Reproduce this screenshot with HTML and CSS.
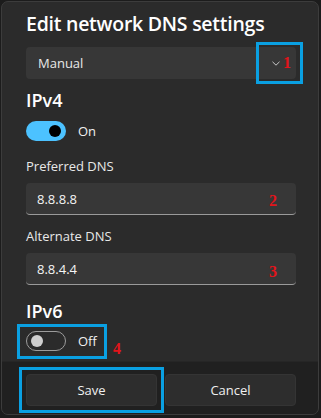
FILE: index.html
```html
<!DOCTYPE html>
<html>
<head>
<meta charset="utf-8">
<link rel="stylesheet" href="styles.css">
</head>
<body>
<div class="dialog">
  <div class="content">
    <h1 class="title">Edit network DNS settings</h1>
    <div class="select">
      <span>Manual</span>
      <svg class="chev" width="8" height="5" viewBox="0 0 8 5"><path d="M0.5 0.8 L4 4.2 L7.5 0.8" fill="none" stroke="#c8c8c8" stroke-width="1"/></svg>
      <span class="mark m1">1</span>
      <span class="hl hl1"></span>
    </div>
    <h2 class="section">IPv4</h2>
    <div class="toggle-row">
      <span class="toggle on"><span class="knob"></span></span>
      <span class="tlabel">On</span>
    </div>
    <div class="label lbl1">Preferred DNS</div>
    <div class="field"><span>8.8.8.8</span><span class="mark m2">2</span></div>
    <div class="label lbl2">Alternate DNS</div>
    <div class="field"><span>8.8.4.4</span><span class="mark m3">3</span></div>
    <h2 class="section s6">IPv6</h2>
    <div class="toggle-row off-row">
      <span class="toggle off"><span class="knob"></span></span>
      <span class="tlabel">Off</span>
      <span class="hl hl4"></span>
      <span class="mark m4">4</span>
    </div>
  </div>
  <div class="footer">
    <button class="btn save">Save<span class="hl hl5"></span></button>
    <button class="btn">Cancel</button>
  </div>
</div>
</body>
</html>
```
FILE: styles.css
```css
html, body {
  margin: 0;
  padding: 0;
  background: #1c1c1c;
}
body {
  width: 321px;
  height: 418px;
  overflow: hidden;
  font-family: "Open Sans", "Noto Sans", sans-serif;
  color: #ffffff;
}
.dialog {
  margin: 1px 0 0 1px;
  width: 316px;
  height: 412px;
  border: 1px solid #3c3c3c;
  border-radius: 7px;
  background: #2b2b2b;
  overflow: hidden;
  display: flex;
  flex-direction: column;
}
.content {
  padding: 0 20px 0 24px;
  flex: 1;
  display: flex;
  flex-direction: column;
}
.title {
  margin: 8px 0 0 0;
  font-size: 19.5px;
  font-weight: 600;
  line-height: 28px;
  letter-spacing: -0.25px;
  height: 29px;
}
.select {
  position: relative;
  margin-top: 8px;
  height: 32px;
  width: 270px;
  box-sizing: border-box;
  background: #373737;
  border-radius: 4px;
  display: flex;
  align-items: center;
  padding-left: 12px;
  font-size: 13px;
  color: #e8e8e8;
}
.chev {
  position: absolute;
  left: 246px;
  top: 14px;
}
.mark {
  position: absolute;
  font-family: "Liberation Serif", serif;
  font-weight: bold;
  color: #e2141b;
  font-size: 16px;
  line-height: 16px;
}
.m1 { left: 257px; top: 8px; }
.m2 { left: 243px; top: 10px; }
.m3 { left: 243px; top: 11px; }
.m4 { left: 87px; top: 10px; }
.hl {
  position: absolute;
  border: 3px solid #0aa0e2;
  box-sizing: border-box;
  pointer-events: none;
}
.hl1 { left: 230px; top: -5px; width: 47px; height: 42px; }
.section {
  margin: 9px 0 0 0;
  font-size: 18px;
  font-weight: 600;
  line-height: 24px;
  height: 24px;
}
.toggle-row {
  position: relative;
  margin-top: 9px;
  display: flex;
  align-items: center;
  height: 20px;
}
.toggle {
  width: 40px;
  height: 20px;
  border-radius: 10px;
  box-sizing: border-box;
  position: relative;
  flex: none;
}
.toggle.on { background: #4cc2ff; }
.toggle.on .knob {
  position: absolute;
  width: 12px;
  height: 12px;
  border-radius: 50%;
  background: #000;
  left: 23px;
  top: 4px;
}
.toggle.off { border: 1px solid #9c9c9c; }
.toggle.off .knob {
  position: absolute;
  width: 12px;
  height: 12px;
  border-radius: 50%;
  background: #cfcfcf;
  left: 4px;
  top: 3px;
}
.tlabel {
  margin-left: 12px;
  font-size: 13px;
  color: #f0f0f0;
}
.label {
  font-size: 13px;
  color: #e8e8e8;
  line-height: 18px;
}
.lbl1 { margin-top: 16px; }
.lbl2 { margin-top: 12px; }
.field {
  position: relative;
  margin-top: 8px;
  height: 32px;
  width: 270px;
  box-sizing: border-box;
  background: #373737;
  border-radius: 4px;
  border-bottom: 1px solid #9a9a9a;
  display: flex;
  align-items: center;
  padding-left: 11px;
  font-size: 13px;
  color: #f5f5f5;
}
.s6 { margin-top: 14px; }
.off-row { margin-top: 8px; }
.hl4 { left: -9px; top: -7px; width: 90px; height: 35px; }
.footer {
  height: 53px;
  background: #202020;
  border-top: 1px solid #262626;
  display: flex;
  gap: 8px;
  padding: 12px 20px 0 24px;
  box-sizing: border-box;
}
.btn {
  position: relative;
  width: 131px;
  height: 32px;
  background: #2d2d2d;
  border: 1px solid #343434;
  border-radius: 4px;
  color: #f0f0f0;
  font-family: "Open Sans", "Noto Sans", sans-serif;
  font-size: 13px;
  padding: 0;
}
.hl5 { left: -8px; top: -8px; width: 145px; height: 46px; }
```
